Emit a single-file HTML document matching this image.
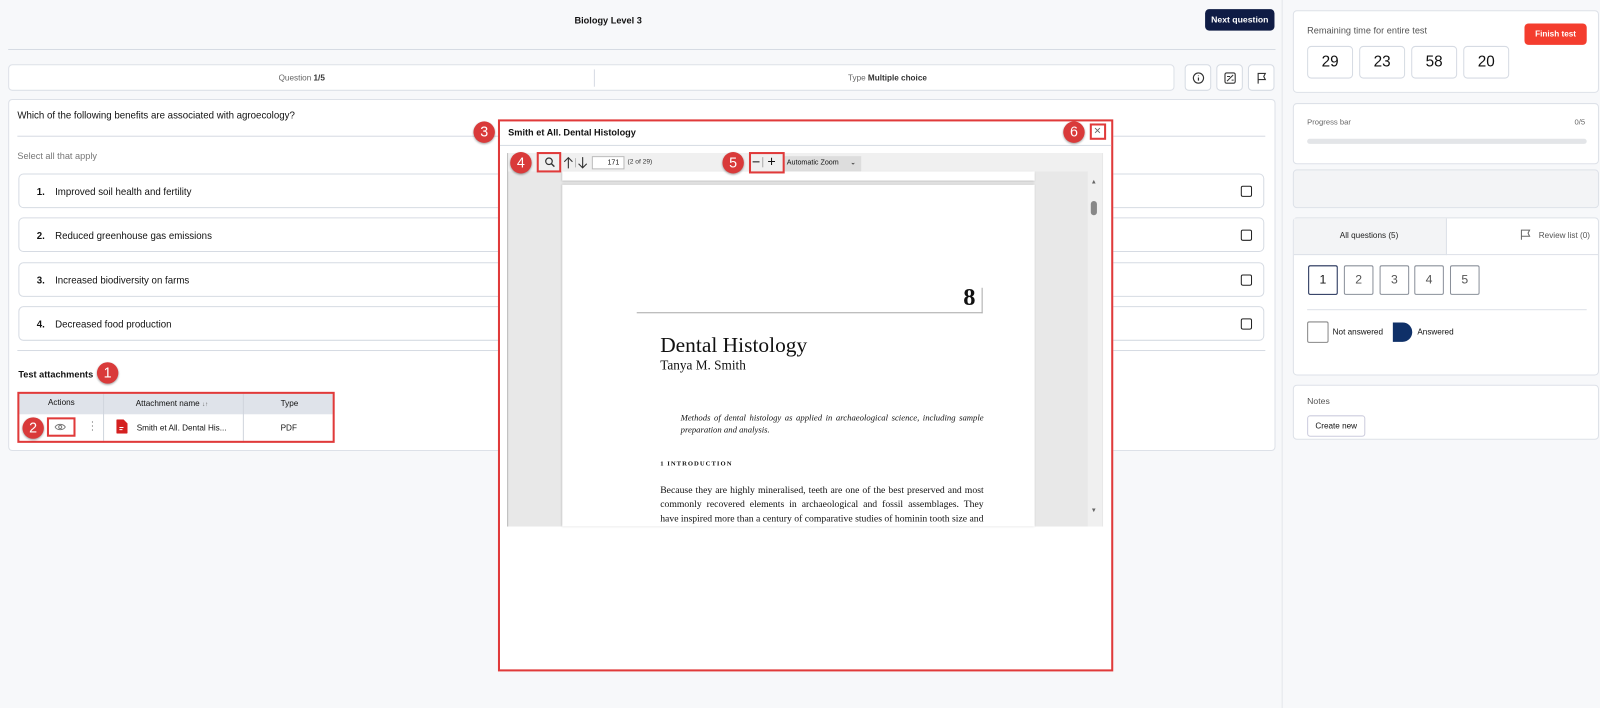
<!DOCTYPE html>
<html><head><meta charset="utf-8"><style>
*{box-sizing:border-box;margin:0;padding:0}
html,body{width:1600px;height:708px;overflow:hidden}
body{background:#f7f8fa;font-family:"Liberation Sans",sans-serif;font-size:9px;color:#111;position:relative}
#w{position:absolute;left:0;top:0;width:1568px;height:694px;transform:scale(1.0204);transform-origin:0 0}
.a{position:absolute}
.card{position:absolute;background:#fff;border:1px solid #dde1e8;border-radius:4px}
.opt{position:absolute;left:18px;width:1221px;height:34px;background:#fff;border:1px solid #d6dbe3;border-radius:5px;font-size:9.5px}
.opt b{position:absolute;left:17px;top:12px;font-weight:bold}
.opt span{position:absolute;left:35px;top:12px}
.opt i{position:absolute;right:11px;top:11px;width:11px;height:11px;border:1.3px solid #222;border-radius:2px}
.badge{position:absolute;width:21px;height:21px;border-radius:50%;background:#d93a3a;color:#fff;font-size:14px;text-align:center;line-height:21px;box-shadow:0 1px 2px rgba(0,0,0,.4)}
.rb{position:absolute;border:2px solid #e03a3a}
.ib{position:absolute;top:63px;width:26px;height:26px;background:#fff;border:1px solid #d6dbe3;border-radius:4px}
.tm{position:absolute;top:45px;width:45px;height:32px;border:1px solid #d6dbe3;border-radius:4px;font-size:15px;text-align:center;line-height:30px}
.qn{position:absolute;top:260px;width:29px;height:29px;border:1px solid #8a909a;border-radius:2px;font-size:12px;text-align:center;line-height:27px;color:#555}
.serif{font-family:"Liberation Serif",serif}
</style></head><body><div id="w">
<div class="a" style="left:1256px;top:0;width:1px;height:708px;background:#e3e6eb"></div>
<div class="a" style="left:563px;top:15px;font-weight:bold;font-size:9px">Biology Level 3</div>
<div class="a" style="left:1181px;top:9px;width:68px;height:21px;background:#0f1c45;border-radius:4px;color:#fff;font-weight:bold;font-size:8.5px;text-align:center;line-height:21px">Next question</div>
<div class="a" style="left:8px;top:48px;width:1242px;height:1px;background:#d6dbe3"></div>
<div class="card" style="left:8px;top:63px;width:1143px;height:26px"><div class="a" style="left:573px;top:4px;width:1px;height:17px;background:#d6dbe3"></div>
<div class="a" style="left:264px;top:8px;color:#666;font-size:8px">Question <b style="color:#333">1/5</b></div>
<div class="a" style="left:822px;top:8px;color:#666;font-size:8px">Type <b style="color:#333">Multiple choice</b></div></div>
<div class="ib" style="left:1161px"><svg class="a" style="left:6px;top:6px" width="13" height="13" viewBox="0 0 13 13"><circle cx="6.5" cy="6.5" r="5" fill="none" stroke="#333" stroke-width="1.1"/><path d="M6.5 6v3M6.5 4v.6" stroke="#333" stroke-width="1.2"/></svg></div>
<div class="ib" style="left:1192px"><svg class="a" style="left:6px;top:6px" width="13" height="13" viewBox="0 0 13 13"><rect x="1.5" y="1.5" width="10" height="10" rx="1.5" fill="none" stroke="#333" stroke-width="1.1"/><path d="M3.5 9.5l6-6M3.5 5h3M8 8.5h2" stroke="#333" stroke-width="1"/></svg></div>
<div class="ib" style="left:1223px"><svg class="a" style="left:6px;top:6px" width="13" height="13" viewBox="0 0 13 13"><path d="M3 12V2h7l-1.5 3L10 8H3" fill="none" stroke="#333" stroke-width="1.1"/></svg></div>
<div class="card" style="left:8px;top:97px;width:1242px;height:345px"></div>
<div class="a" style="left:17px;top:108px;font-size:9.5px">Which of the following benefits are associated with agroecology?</div>
<div class="a" style="left:17px;top:133px;width:1223px;height:1px;background:#d6dbe3"></div>
<div class="a" style="left:17px;top:148px;color:#777;font-size:9px">Select all that apply</div>
<div class="opt" style="top:170px"><b>1.</b><span>Improved soil health and fertility</span><i></i></div>
<div class="opt" style="top:213px"><b>2.</b><span>Reduced greenhouse gas emissions</span><i></i></div>
<div class="opt" style="top:257px"><b>3.</b><span>Increased biodiversity on farms</span><i></i></div>
<div class="opt" style="top:300px"><b>4.</b><span>Decreased food production</span><i></i></div>
<div class="a" style="left:17px;top:343px;width:1223px;height:1px;background:#d6dbe3"></div>
<div class="a" style="left:18px;top:362px;font-weight:bold;font-size:9px">Test attachments</div>
<div class="a" style="left:19px;top:386px;width:307px;height:46px;background:#fff"></div>
<div class="a" style="left:19px;top:386px;width:307px;height:20px;background:#dfe3ea"></div>
<div class="a" style="left:101px;top:386px;width:1px;height:46px;background:#d0d5dd"></div>
<div class="a" style="left:238px;top:386px;width:1px;height:46px;background:#d0d5dd"></div>
<div class="a" style="left:47px;top:390px;font-size:8px">Actions</div>
<div class="a" style="left:133px;top:391px;font-size:8px">Attachment name <span style="font-size:6px;color:#666">↓↑</span></div>
<div class="a" style="left:275px;top:391px;font-size:8px">Type</div>
<div class="a" style="left:275px;top:415px;font-size:8px">PDF</div>
<div class="a" style="left:134px;top:415px;font-size:8px">Smith et All. Dental His...</div>
<svg class="a" style="left:114px;top:411px" width="11" height="14" viewBox="0 0 11 14"><path d="M0 1a1 1 0 011-1h6l4 4v9a1 1 0 01-1 1H1a1 1 0 01-1-1z" fill="#d42020"/><path d="M3 8h4M3 10h3" stroke="#fff" stroke-width="1"/></svg>
<div class="a" style="left:89px;top:411px;font-size:9px;color:#444;line-height:4px">·<br>·<br>·</div>
<svg class="a" style="left:53px;top:414px" width="12" height="9" viewBox="0 0 12 9"><path d="M1 4.5C3 1 9 1 11 4.5 9 8 3 8 1 4.5z" fill="none" stroke="#777" stroke-width="0.9"/><circle cx="6" cy="4.5" r="1.5" fill="none" stroke="#777" stroke-width="0.9"/></svg>
<div class="rb" style="left:17px;top:384px;width:311px;height:50px"></div>
<div class="rb" style="left:46px;top:409px;width:28px;height:19px"></div>
<div class="badge" style="left:95px;top:355px">1</div>
<div class="badge" style="left:22px;top:409px">2</div>

<div class="a" style="left:488px;top:117px;width:603px;height:541px;background:#fff;border:2px solid #e03a3a"></div>
<div class="a" style="left:498px;top:125px;font-weight:bold;font-size:9px">Smith et All. Dental Histology</div>
<div class="a" style="left:490px;top:142px;width:599px;height:1px;background:#d6dbe3"></div>
<div class="a" style="left:497px;top:150px;width:584px;height:366px;background:#e8e8e8;border-left:1px solid #bbb"></div>
<div class="a" style="left:498px;top:150px;width:582px;height:18px;background:#f0f0f0"></div>
<div class="a" style="left:768px;top:153px;width:76px;height:15px;background:#ddd;font-size:7px;line-height:13px;padding-left:3px">Automatic Zoom <span style="float:right;margin-right:5px">⌄</span></div>
<svg class="a" style="left:533px;top:153px" width="12" height="12" viewBox="0 0 12 12"><circle cx="5" cy="5" r="3.2" fill="none" stroke="#333" stroke-width="1.2"/><path d="M7.3 7.3l3 3" stroke="#333" stroke-width="1.4"/></svg>
<svg class="a" style="left:552px;top:153px" width="24" height="13" viewBox="0 0 24 13"><path d="M5 12V2M1 5.5l4-4 4 4M19 1v10M15 7.5l4 4 4-4" fill="none" stroke="#333" stroke-width="1.1"/><path d="M12 2v9" stroke="#bbb"/></svg>
<div class="a" style="left:580px;top:153px;width:32px;height:13px;background:#fff;border:1px solid #bbb;font-size:7px;text-align:right;padding-right:4px;line-height:11px">171</div>
<div class="a" style="left:615px;top:155px;font-size:6.5px;color:#333">(2 of 29)</div>
<div class="a" style="left:737px;top:151px;font-size:14px;line-height:14px">−</div>
<div class="a" style="left:747px;top:154px;width:1px;height:10px;background:#aaa"></div>
<div class="a" style="left:752px;top:151px;font-size:14px;line-height:14px">+</div>
<div class="a" style="left:551px;top:168px;width:463px;height:9px;background:#fff;box-shadow:0 1px 2px #aaa"></div>
<div class="a" style="left:551px;top:181px;width:463px;height:335px;background:#fff;box-shadow:0 0 2px #aaa"></div>
<div class="a" style="left:1066px;top:168px;width:14px;height:348px;background:#f0f0f0"></div>
<div class="a" style="left:1069px;top:176px;font-size:6px;color:#666">▲</div>
<div class="a" style="left:1069px;top:498px;font-size:6px;color:#666">▼</div>
<div class="a" style="left:1069px;top:197px;width:6px;height:14px;border-radius:3px;background:#888"></div>
<div class="a" style="left:624px;top:306px;width:339px;height:1px;background:#aaa"></div>
<div class="a" style="left:962px;top:282px;width:1px;height:25px;background:#aaa"></div>
<div class="a serif" style="left:944px;top:279px;font-size:24px;font-weight:bold">8</div>
<div class="a serif" style="left:647px;top:326px;font-size:21px">Dental Histology</div>
<div class="a serif" style="left:647px;top:350px;font-size:13px">Tanya M. Smith</div>
<div class="a serif" style="left:667px;top:403px;font-size:8.5px;font-style:italic;width:297px;line-height:12px;text-align:justify">Methods of dental histology as applied in archaeological science, including sample preparation and analysis.</div>
<div class="a serif" style="left:647px;top:451px;font-size:6.5px;font-weight:bold;letter-spacing:1px">1 INTRODUCTION</div>
<div class="a serif" style="left:647px;top:474px;width:317px;font-size:9.5px;line-height:14px;text-align:justify;height:42px;overflow:hidden">Because they are highly mineralised, teeth are one of the best preserved and most commonly recovered elements in archaeological and fossil assemblages. They have inspired more than a century of comparative studies of hominin tooth size and</div>
<div class="a" style="left:1072px;top:121px;font-size:12px;color:#666">×</div>
<div class="rb" style="left:526px;top:149px;width:24px;height:20px"></div>
<div class="rb" style="left:734px;top:149px;width:35px;height:21px"></div>
<div class="rb" style="left:1068px;top:121px;width:16px;height:16px"></div>
<div class="badge" style="left:464px;top:119px">3</div>
<div class="badge" style="left:500px;top:149px">4</div>
<div class="badge" style="left:708px;top:149px">5</div>
<div class="badge" style="left:1042px;top:119px">6</div>

<div class="card" style="left:1267px;top:10px;width:300px;height:81px"></div>
<div class="a" style="left:1281px;top:25px;color:#555;font-size:9px">Remaining time for entire test</div>
<div class="a" style="left:1494px;top:23px;width:61px;height:21px;background:#f43d2e;border-radius:4px;color:#fff;font-weight:bold;font-size:8px;text-align:center;line-height:21px">Finish test</div>
<div class="tm" style="left:1281px">29</div><div class="tm" style="left:1332px">23</div><div class="tm" style="left:1383px">58</div><div class="tm" style="left:1434px">20</div>
<div class="card" style="left:1267px;top:101px;width:300px;height:60px"></div>
<div class="a" style="left:1281px;top:115px;color:#666;font-size:7.5px">Progress bar</div>
<div class="a" style="left:1543px;top:115px;color:#666;font-size:7.5px">0/5</div>
<div class="a" style="left:1281px;top:136px;width:274px;height:5px;border-radius:3px;background:#e3e5e8"></div>
<div class="card" style="left:1267px;top:166px;width:300px;height:38px;background:#f3f4f6"></div>
<div class="card" style="left:1267px;top:213px;width:300px;height:155px"></div>
<div class="a" style="left:1268px;top:214px;width:150px;height:36px;background:#f3f4f6;border-right:1px solid #dde1e8;border-bottom:1px solid #dde1e8"></div>
<div class="a" style="left:1418px;top:249px;width:148px;height:1px;background:#dde1e8"></div>
<div class="a" style="left:1313px;top:226px;font-size:8px;color:#222">All questions (5)</div>
<svg class="a" style="left:1489px;top:224px" width="12" height="12" viewBox="0 0 12 12"><path d="M2 11V1.5h8l-1.5 3L10 7.5H2" fill="none" stroke="#666" stroke-width="1"/></svg>
<div class="a" style="left:1508px;top:226px;font-size:8px;color:#555">Review list (0)</div>
<div class="qn" style="left:1282px;border-color:#1e2c55;color:#111">1</div>
<div class="qn" style="left:1317px">2</div><div class="qn" style="left:1352px">3</div><div class="qn" style="left:1386px">4</div><div class="qn" style="left:1421px">5</div>
<div class="a" style="left:1281px;top:303px;width:274px;height:1px;background:#dde1e8"></div>
<div class="a" style="left:1281px;top:315px;width:21px;height:21px;border:1px solid #888;border-radius:2px"></div>
<div class="a" style="left:1306px;top:321px;font-size:8px">Not answered</div>
<div class="a" style="left:1365px;top:316px;width:19px;height:19px;background:#0f3068;border-radius:0 10px 10px 0"></div>
<div class="a" style="left:1389px;top:321px;font-size:8px">Answered</div>
<div class="card" style="left:1267px;top:377px;width:300px;height:54px"></div>
<div class="a" style="left:1281px;top:388px;font-size:8.5px;color:#555">Notes</div>
<div class="a" style="left:1281px;top:407px;width:57px;height:21px;border:1px solid #ccd;border-radius:3px;font-size:8px;text-align:center;line-height:19px">Create new</div>
</div></body></html>
